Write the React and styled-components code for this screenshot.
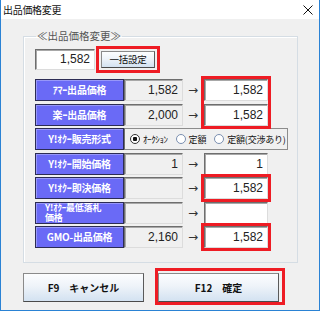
import React from 'react'
import styled, { createGlobalStyle } from 'styled-components'

const Global = createGlobalStyle`
  html, body {
    margin: 0;
    padding: 0;
    background: #ffffff;
  }
  body {
    font-family: "Noto Sans CJK JP", "Liberation Sans", sans-serif;
  }
`

const rows = [
  { label: 'ｱﾏｰ出品価格', current: '1,582', next: '1,582' },
  { label: '楽ｰ出品価格', current: '2,000', next: '1,582' },
  { label: 'Y!ｵｸｰ販売形式', radio: true },
  { label: 'Y!ｵｸｰ開始価格', current: '1', next: '1' },
  { label: 'Y!ｵｸｰ即決価格', current: '', next: '1,582' },
  { label: 'Y!ｵｸｰ最低落札価格', current: '', next: '', wrap: true },
  { label: 'GMO-出品価格', current: '2,160', next: '1,582' },
]

const highlights = [
  { row: 1, span: 2 },
  { row: 5, span: 1 },
  { row: 7, span: 1 },
]

const App = () => {
  return (
    <Window>
      <Global />
      <TitleBar>
        <Title>出品価格変更</Title>
        <Close viewBox="0 0 10 10" width="10" height="10">
          <path d="M0.5 0.5 L9.5 9.5 M9.5 0.5 L0.5 9.5" stroke="#111" strokeWidth="1" />
        </Close>
      </TitleBar>
      <Body>
        <Group>
          <Legend>≪出品価格変更≫</Legend>
          <TopRow>
            <ValueBox $width="60px">1,582</ValueBox>
            <Frame $pad="2px 2px">
              <SmallButton>一括設定</SmallButton>
            </Frame>
          </TopRow>
          <Grid>
            {rows.map((r, i) => (
              <React.Fragment key={r.label}>
                <Label $wrap={r.wrap} style={{ gridRow: i + 1 }}>
                  {r.wrap ? (
                    <>
                      Y!ｵｸｰ最低落札
                      <br />
                      価格
                    </>
                  ) : (
                    r.label
                  )}
                </Label>
                {r.radio ? (
                  <RadioGroup style={{ gridRow: i + 1 }}>
                    <RadioItem>
                      <Radio $checked />
                      <RadioText $small>ｵｰｸｼｮﾝ</RadioText>
                    </RadioItem>
                    <RadioItem>
                      <Radio />
                      <RadioText>定額</RadioText>
                    </RadioItem>
                    <RadioItem>
                      <Radio />
                      <RadioText>定額(交渉あり)</RadioText>
                    </RadioItem>
                  </RadioGroup>
                ) : (
                  <>
                    <CurrentBox style={{ gridRow: i + 1 }}>{r.current}</CurrentBox>
                    <Arrow style={{ gridRow: i + 1 }}>→</Arrow>
                    <NewBox style={{ gridRow: i + 1 }}>{r.next}</NewBox>
                  </>
                )}
              </React.Fragment>
            ))}
            {highlights.map((h) => (
              <Highlight key={h.row} style={{ gridRow: `${h.row} / span ${h.span}` }} />
            ))}
          </Grid>
        </Group>
        <ButtonRow>
          <BigButton>F9　キャンセル</BigButton>
          <Frame $pad="2px 3px 0 0">
            <BigButton>F12　確定</BigButton>
          </Frame>
        </ButtonRow>
      </Body>
    </Window>
  )
}

export default App

const Window = styled.div`
  width: 320px;
  height: 311px;
  box-sizing: border-box;
  display: flex;
  flex-direction: column;
  background: #f0f0f0;
  border: 1px solid #2a82d4;
  border-top: none;
  overflow: hidden;
`

const TitleBar = styled.div`
  height: 19px;
  flex: none;
  background: #ffffff;
  display: flex;
  align-items: center;
  justify-content: space-between;
  padding: 0 6px 0 2px;
`

const Title = styled.span`
  font-size: 10px;
  color: #111;
  letter-spacing: -0.3px;
`

const Close = styled.svg`
  display: block;
  margin-top: 1px;
`

const Body = styled.div`
  flex: 1;
  display: flex;
  flex-direction: column;
  padding: 10px 21px 0 22px;
`

const Group = styled.fieldset`
  margin: 0;
  padding: 3px 0 14px 11px;
  border: 1px solid #d5dde4;
  box-shadow: inset 1px 1px 0 #ffffff;
  min-width: 0;
`

const Legend = styled.legend`
  padding: 0 1px;
  margin-left: 1px;
  font-size: 10.5px;
  line-height: 14px;
  color: #555;
`

const TopRow = styled.div`
  display: flex;
  align-items: center;
  gap: 1px;
  height: 26px;
`

const sunken = `
  box-sizing: border-box;
  border: 1px solid;
  border-color: #6e6e6e #dcdcdc #dcdcdc #6e6e6e;
  box-shadow: inset 1px 1px 0 #a8a8a8;
  font-family: "Liberation Sans", sans-serif;
  font-size: 12px;
  color: #222;
  display: flex;
  align-items: center;
  justify-content: flex-end;
  padding-right: 4px;
`

const ValueBox = styled.div`
  ${sunken}
  width: ${(p) => p.$width};
  height: 21px;
  background: #ffffff;
`

const Frame = styled.div`
  border: 3px solid #ee1c24;
  padding: ${(p) => p.$pad};
  display: flex;
`

const buttonFace = `
  box-sizing: border-box;
  border: 1px solid #8a8a8a;
  border-right-color: #5a5a5a;
  border-bottom-color: #4a4a4a;
  background: linear-gradient(#fcfdfe 0%, #eef3f9 45%, #d3e2f1 100%);
  font-family: "Noto Sans CJK JP", sans-serif;
  color: #111;
  font-weight: 700;
  display: flex;
  align-items: center;
  justify-content: center;
`

const SmallButton = styled.div`
  ${buttonFace}
  width: 54px;
  height: 17px;
  font-size: 9.5px;
  font-weight: 400;
  letter-spacing: -0.3px;
`

const Grid = styled.div`
  display: grid;
  grid-template-columns: 89px 59px 20px 65px 22px;
  grid-auto-rows: 22px;
  row-gap: 2.5px;
  margin-top: 7px;
`

const Label = styled.div`
  grid-column: 1;
  box-sizing: border-box;
  background: #6a6af6;
  border: 1px solid #2c2c54;
  box-shadow: inset 1px 1px 0 rgba(255, 255, 255, 0.3);
  color: #ffffff;
  font-weight: 700;
  font-size: ${(p) => (p.$wrap ? '9px' : '10px')};
  line-height: ${(p) => (p.$wrap ? '10px' : '20px')};
  text-align: ${(p) => (p.$wrap ? 'left' : 'center')};
  padding-left: ${(p) => (p.$wrap ? '9px' : '0')};
  white-space: nowrap;
  overflow: hidden;
  letter-spacing: -0.2px;
`

const CurrentBox = styled.div`
  ${sunken}
  grid-column: 2;
  background: #f0f0f0;
`

const Arrow = styled.div`
  grid-column: 3;
  display: flex;
  align-items: center;
  justify-content: center;
  font-family: "DejaVu Sans", sans-serif;
  font-size: 12px;
  color: #333;
`

const NewBox = styled.div`
  ${sunken}
  grid-column: 4;
  margin: 0 0 0 1px;
  background: #ffffff;
`

const Highlight = styled.div`
  grid-column: 4;
  margin: -3px -3px -3px -2px;
  border: 3px solid #ee1c24;
  z-index: 1;
  pointer-events: none;
`

const RadioGroup = styled.div`
  grid-column: 2 / -1;
  box-sizing: border-box;
  border: 1px solid #8c8c8c;
  border-left-color: #6e6e6e;
  display: flex;
  align-items: center;
  gap: 8px;
  padding-left: 5px;
  margin-right: 2px;
  overflow: hidden;
`

const RadioItem = styled.div`
  display: flex;
  align-items: center;
  gap: 3px;
`

const Radio = styled.span`
  flex: none;
  box-sizing: border-box;
  width: 10px;
  height: 10px;
  border-radius: 50%;
  border: 1px solid ${(p) => (p.$checked ? '#333' : '#7a8fb0')};
  background: ${(p) => (p.$checked ? 'radial-gradient(circle, #111 0 2px, #fff 2.5px)' : '#fff')};
`

const RadioText = styled.span`
  font-size: 9px;
  color: #111;
  letter-spacing: ${(p) => (p.$small ? '-0.4px' : '-0.2px')};
  white-space: nowrap;
`

const ButtonRow = styled.div`
  display: flex;
  align-items: flex-start;
  gap: 11px;
  margin-top: 5px;
`

const BigButton = styled.div`
  ${buttonFace}
  width: 121px;
  height: 29px;
  margin-top: 5px;
  font-size: 10px;
  &:only-child {
    margin-top: 0;
  }
`
